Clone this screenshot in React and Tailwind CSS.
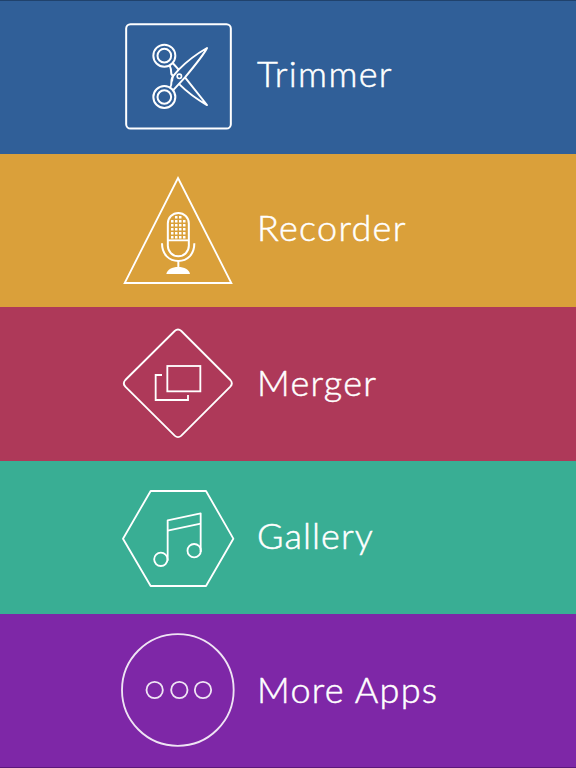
import React from "react";

const TrimmerIcon = () => (
  <g transform="translate(0 45)" strokeWidth="6">
    <rect x="30.500" y="24.500" width="314" height="313" rx="13" />
    <circle cx="145" cy="119" r="33" />
    <circle cx="145" cy="119" r="20.5" />
    <circle cx="145" cy="243" r="33" />
    <circle cx="145" cy="243" r="20.5" />
    <path d="M170 141 L188 161" />
    <path d="M161 148 Q166 158 166 174 L171 180 Q166 187 166 201 Q167 208 162 215" />
    <path d="M170 182 L188 161 Q224 124 273 96 Q263 117 207 184 L171 223" />
    <path d="M207 184 L273 267 Q226 241 188 203" />
    <path d="M170 182 L168 196" />
    <circle cx="190" cy="181" r="6.500" strokeWidth="5" />
  </g>
);

const micDots = [
  [180, 192],
  [168, 180, 192, 204],
  [168, 180, 192, 204],
  [168, 180, 192, 204],
  [168, 180, 192, 204],
  [168, 180, 192, 204],
];

const RecorderIcon = () => (
  <g transform="translate(0 48)" strokeWidth="5.5">
    <path d="M186 24 L346 339 H26 Z" strokeLinejoin="miter" />
    <rect x="155.500" y="129" width="63" height="130" rx="31.500" strokeWidth="6" />
    <path d="M156 211 H218" />
    <path d="M138 220 C138 254 160 273 187 273 C214 273 235 254 235 220" strokeWidth="6" />
    <path d="M187 273 V294" strokeWidth="6" />
    <path d="M151 312 C154 298 168 291 186.500 291 C205 291 219 298 222 312 Z" fill="white" stroke="none" />
    {micDots.map((row, i) =>
      row.map((x) => (
        <rect key={`${i}-${x}`} x={x - 3} y={138 + i * 12} width="7.500" height="7.500" rx="1" fill="white" stroke="none" />
      ))
    )}
  </g>
);

const MergerIcon = () => (
  <g transform="translate(0 45)" strokeWidth="5.500" strokeLinejoin="miter">
    <path d="M176 27 Q186 18 196 27 L343 174 Q352 184 343 194 L196 341 Q186 350 176 341 L28 194 Q19 184 28 174 Z" />
    <rect x="154" y="132" width="99" height="76" />
    <path d="M138 159 H119 V234 H216 V219" />
  </g>
);

const GalleryIcon = () => (
  <g transform="translate(0 57)" strokeWidth="5.500">
    <path d="M104 33 H270 L352 176 L270 318 H104 L21 176 Z" />
    <circle cx="134.500" cy="238" r="20" />
    <circle cx="234.500" cy="212" r="20" />
    <path d="M155 242 V121 L254 100 V216" />
    <path d="M155 152 L254 131" />
  </g>
);

const MoreIcon = () => (
  <g transform="translate(0 42)" strokeWidth="5.500" strokeOpacity="0.88">
    <circle cx="185.500" cy="186" r="167.500" />
    <circle cx="116" cy="186" r="24.500" />
    <circle cx="190" cy="186" r="24.500" />
    <circle cx="261" cy="186" r="24.500" />
  </g>
);

const menuItems = [
  { label: "Trimmer", Icon: TrimmerIcon, row: "bg-[#305f98] border-t border-[#20426c]", text: "pt-[50px] tracking-[1.3px]" },
  { label: "Recorder", Icon: RecorderIcon, row: "bg-[#daa03a]", text: "pt-[51px] tracking-[1.3px]" },
  { label: "Merger", Icon: MergerIcon, row: "bg-[#ae3959]", text: "pt-[53px] tracking-[1.3px]" },
  { label: "Gallery", Icon: GalleryIcon, row: "bg-[#39ae94]", text: "pt-[52px] tracking-[1.1px]" },
  { label: "More Apps", Icon: MoreIcon, row: "bg-[#7e27a7] border-b border-[#5b187b]", text: "pt-[53px] tracking-[1.3px]" },
];

const App = () => {
  return (
    <nav className="grid h-screen w-full grid-rows-[154px_153px_154px_153px_154px] overflow-hidden font-['Lato',sans-serif]">
      {menuItems.map(({ label, Icon, row, text }) => (
        <button key={label} className={`flex items-start overflow-hidden pl-[116px] text-left text-white ${row}`}>
          <svg
            viewBox="0 0 372 462"
            className="h-[154px] w-[124px] shrink-0"
            fill="none"
            stroke="white"
            strokeLinejoin="round"
          >
            <Icon />
          </svg>
          <span
            className={`pl-[17px] text-[36px] leading-[44px] font-light whitespace-nowrap [-webkit-text-stroke:0.5px_white] ${text}`}
          >
            {label}
          </span>
        </button>
      ))}
    </nav>
  );
};

export default App;
